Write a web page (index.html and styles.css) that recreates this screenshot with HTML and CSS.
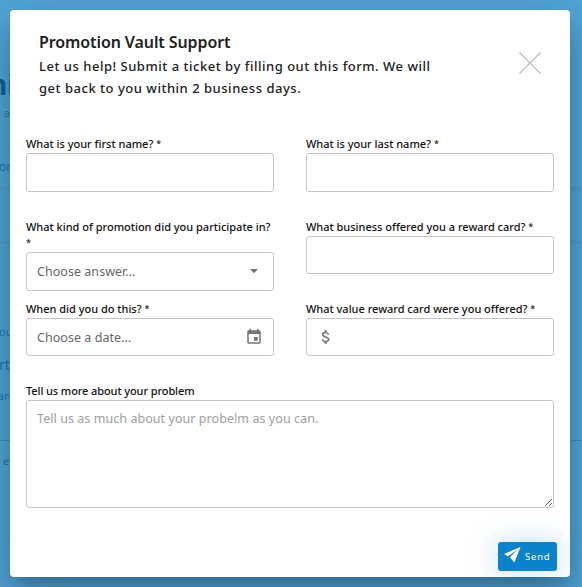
FILE: index.html
```html
<!DOCTYPE html>
<html lang="en">
<head>
<meta charset="utf-8">
<title>Promotion Vault Support</title>
<link rel="stylesheet" href="styles.css">
</head>
<body>
<div class="page" aria-hidden="true">
  <div class="hero">
    <div class="clip hero-title">ni</div>
    <div class="clip hero-note">a</div>
    <div class="clip hero-sub">or</div>
  </div>
  <div class="band"></div>
  <div class="details">
    <div class="clip line-you">ou</div>
    <div class="clip line-part">rt</div>
    <div class="clip line-card">arc</div>
  </div>
  <div class="footer"><div class="clip line-foot">e</div></div>
</div>
<form class="dialog">
  <header class="header">
    <div>
      <h1 class="title">Promotion Vault Support</h1>
      <p class="intro">Let us help! Submit a ticket by filling out this form. We will<br>get back to you within 2 business days.</p>
    </div>
    <svg class="close" viewBox="0 0 24 24"><path d="M1.5 1.5 22.500 22.500M22.500 1.500 1.500 22.500"/></svg>
  </header>
  <div class="grid">
    <label class="field"><span class="label">What is your first name? <span class="star">*</span></span><input class="box" type="text"></label>
    <label class="field"><span class="label">What is your last name? <span class="star">*</span></span><input class="box" type="text"></label>
    <div class="field"><span class="label">What kind of promotion did you participate in?<br><span class="star">*</span></span>
      <div class="box"><span class="value">Choose answer...</span><svg class="arrow" viewBox="0 0 10 5"><path d="M1 0h8L5 4.200z"/></svg></div></div>
    <label class="field"><span class="label">What business offered you a reward card? <span class="star">*</span></span><input class="box short" type="text"></label>
    <div class="field"><span class="label">When did you do this? <span class="star">*</span></span>
      <div class="box short"><span class="value">Choose a date...</span><svg class="calendar" viewBox="0 0 24 24"><path d="M17 12h-5v5h5v-5zM16 1v2H8V1H6v2H5c-1.110 0-1.990.9-1.990 2L3 19c0 1.100.89 2 2 2h14c1.100 0 2-.9 2-2V5c0-1.100-.9-2-2-2h-1V1h-2zm3 18H5V8h14v11z"/></svg></div></div>
    <div class="field"><span class="label">What value reward card were you offered? <span class="star">*</span></span>
      <div class="box short"><svg class="dollar" viewBox="0 0 24 24"><path d="M11.800 10.900c-2.270-.59-3-1.200-3-2.150 0-1.090 1.010-1.850 2.700-1.850 1.780 0 2.440.85 2.500 2.100h2.210c-.07-1.720-1.120-3.300-3.210-3.810V3h-3v2.160c-1.940.42-3.500 1.680-3.500 3.610 0 2.310 1.910 3.460 4.700 4.130 2.500.6 3 1.480 3 2.410 0 .69-.49 1.790-2.700 1.790-2.060 0-2.870-.92-2.980-2.100h-2.200c.12 2.190 1.760 3.420 3.680 3.830V21h3v-2.150c1.950-.37 3.500-1.500 3.500-3.550 0-2.840-2.430-3.810-4.700-4.400z"/></svg></div></div>
  </div>
  <label class="field"><span class="label problem">Tell us more about your problem</span><textarea class="area" placeholder="Tell us as much about your probelm as you can."></textarea></label>
  <button class="send" type="button"><svg class="plane" viewBox="0 0 18 18"><path d="M17.500.5 0 8l4.200 2.300L14 3.500 6.200 11.500l4.800 5.500z"/></svg><span>Send</span></button>
</form>
</body>
</html>
```
FILE: styles.css
```css
* { box-sizing: border-box; }
body { margin: 0; width: 582px; height: 587px; overflow: hidden; position: relative; font-family: "Noto Sans", sans-serif; color: #212121; }
.page { height: 587px; background: #52a6d9; color: #1f76ab; display: flex; flex-direction: column; }
.hero { height: 187px; padding-top: 62px; }
.band { height: 54px; background: linear-gradient(#4c9dce, #52a6d9 8px); }
.details { height: 200px; padding-top: 80px; border-bottom: 1px solid #3e8fbf; background: linear-gradient(#4c9dce, #52a6d9 4px); }
.clip { white-space: nowrap; }
.hero-title { font: bold 28px/44px "Noto Sans", sans-serif; margin-left: -11px; color: #08659b; }
.hero-note { font-size: 10px; line-height: 14px; margin-left: 4px; }
.hero-sub { font-size: 12px; line-height: 18px; margin: 38px 0 0 -1px; }
.line-you { font-size: 11px; line-height: 22px; margin-left: -1px; }
.line-part { font-size: 14px; line-height: 20px; margin: 12px 0 0 -1px; }
.line-card { font-size: 11px; line-height: 16px; margin: 13px 0 0 -2px; }
.line-foot { font-size: 11px; line-height: 16px; margin: 12px 0 0 3px; }
.dialog { position: absolute; left: 10px; top: 10px; width: 560px; height: 567px; padding: 0 16px; background: #fff; border-radius: 4px; box-shadow: 0 11px 15px -7px rgba(0,0,0,.2), 0 24px 38px 3px rgba(0,0,0,.14), 0 9px 46px 8px rgba(0,0,0,.12); display: flex; flex-direction: column; }
.header { height: 126px; padding: 20px 13px 0; display: flex; justify-content: space-between; flex: none; }
.title { margin: 0; font: 600 16px/24px "Noto Sans", sans-serif; letter-spacing: -.1px; white-space: nowrap; }
.intro { margin: 1px 0 0; font-size: 13px; font-weight: 500; line-height: 22px; white-space: nowrap; letter-spacing: .52px; }
.close { width: 24px; height: 24px; margin-top: 21px; margin-right: -1px; fill: none; stroke: #bdbdbd; stroke-width: 1.4; }
.grid { display: grid; grid-template-columns: 248px 248px; column-gap: 32px; grid-template-rows: 83px 82px 82px; flex: none; }
.field { display: block; }
.label { display: block; font-size: 11px; font-weight: 500; line-height: 16px; margin-bottom: 1px; white-space: nowrap; letter-spacing: -.01px; color: #111; }
.label.problem { letter-spacing: -.1px; }
.star { font-size: 9px; line-height: 0; vertical-align: 1px; }
.box { display: flex; align-items: center; justify-content: space-between; width: 248px; height: 39px; margin: 0; padding: 0 10px; border: 1px solid #c4c4c4; border-radius: 3px; background: #fff; outline: 0; }
.box.short { height: 38px; }
.value { font-size: 12.5px; color: #666; white-space: nowrap; letter-spacing: .04px; }
.arrow { width: 10px; height: 5px; margin-right: 4px; fill: #757575; }
.calendar { width: 18px; height: 18px; fill: #757575; }
.dollar { width: 18px; height: 18px; fill: #757575; }
.area { display: block; width: 528px; height: 108px; margin: 0; padding: 8px 10px; border: 1px solid #c4c4c4; border-radius: 3px; font: 12.5px/20px "Noto Sans", sans-serif; letter-spacing: .06px; resize: both; outline: 0; }
.area::placeholder { color: #9e9e9e; }
.send { display: flex; align-items: center; align-self: flex-end; width: 59px; height: 29px; margin: 34px -3px 0 0; padding: 0 6px; gap: 4px; border: 0; border-radius: 3px; background: #0b82ca; color: #fff; font: 9.5px/16px "Noto Sans", sans-serif; letter-spacing: .8px; box-shadow: 0 0 28px rgba(11,130,202,.28); }
.plane { width: 17px; height: 18px; flex: none; fill: #fff; margin-top: -4px; }
```
